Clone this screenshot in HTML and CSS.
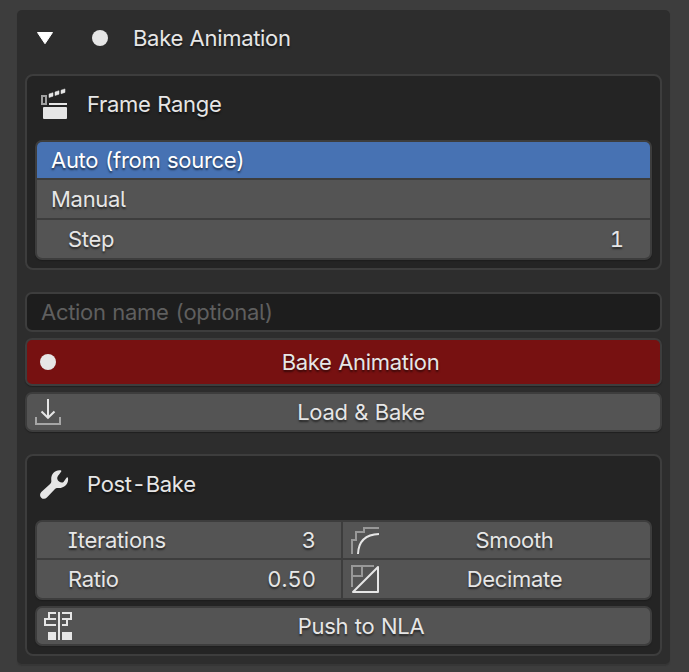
FILE: index.html
```html
<!DOCTYPE html>
<html lang="en">
<head>
<meta charset="utf-8">
<title>Bake Animation</title>
<link rel="stylesheet" href="styles.css">
</head>
<body>
<main class="panel">
  <header class="panel-header">
    <svg class="arrow" width="18" height="14" viewBox="0 0 18 14"><path d="M1.500 1.500h15L9 12.700z" fill="#fff" stroke="#fff" stroke-linejoin="round"/></svg>
    <span class="dot"></span>
    <h1 class="title">Bake Animation</h1>
  </header>

  <section class="box">
    <div class="box-header">
      <svg class="icon" width="32" height="32" viewBox="0 0 32 32">
        <path d="M4 8h4v8H4z" fill="none" stroke="#a0a0a0" stroke-width="2"/>
        <path d="M11 6l4-1.300v3.500L11 9.500zM17 4l4-1.300v3.500L17 7.500zM23 2.200l4-1.300v3.500L23 5.700z" fill="#e6e6e6" stroke="#e6e6e6" stroke-width=".5"/>
        <path d="M11 15h18v2H11z" fill="#e6e6e6"/>
        <rect x="5" y="19" width="24" height="12" rx="1" fill="#e6e6e6"/>
      </svg>
      <h2 class="title">Frame Range</h2>
    </div>
    <div class="group">
      <div class="row choice selected">Auto (from source)</div>
      <div class="row choice">Manual</div>
      <div class="row number"><span>Step</span><span class="value">1</span></div>
    </div>
  </section>

  <div class="actions">
    <input class="field" type="text" placeholder="Action name (optional)">
    <button class="button record"><span class="dot"></span><span class="label">Bake Animation</span></button>
    <button class="button">
      <svg class="icon" width="32" height="32" viewBox="0 0 32 32" fill="none" stroke-width="2">
        <path d="M4 21v7h24v-7" stroke="#a6a6a6"/>
        <path d="M16 3v18.500M9.500 15.500l6.500 6.300 6.500-6.300" stroke="#e6e6e6"/>
      </svg>
      <span class="label">Load &amp; Bake</span>
    </button>
  </div>

  <section class="box">
    <div class="box-header">
      <svg class="icon" width="32" height="32" viewBox="0 0 32 32">
        <path d="M22.500 2.200C17 1.500 12.500 6 13.300 12.500c.2 1.500-.2 2.500-1.200 3.500L3.300 24c-3.800 4 1.800 9.300 5.600 5.600l7.600-8.200c1-1 2-1.400 3.500-1.400 6.500.5 10.800-4.500 10-9.800-.1-1.200-.8-1.300-1.500-.5l-3 4.300c-1.800 1.600-5.500-.3-6.200-3-.3-1.700.4-3 1.600-4.300l2-2.700c.7-.9.600-1.700-.4-1.800z" fill="#e6e6e6"/>
      </svg>
      <h2 class="title">Post-Bake</h2>
    </div>
    <div class="group grid">
      <div class="row number"><span>Iterations</span><span class="value">3</span></div>
      <button class="row operator">
        <svg class="icon" width="32" height="32" viewBox="0 0 32 32" fill="none" stroke-width="2">
          <path d="M3 30V16h4V8h8V4h15" stroke="#989898"/>
          <path d="M9 30C9.500 17 17 10.500 30 10" stroke="#e6e6e6"/>
        </svg>
        <span class="label">Smooth</span>
      </button>
      <div class="row number"><span>Ratio</span><span class="value">0.50</span></div>
      <button class="row operator">
        <svg class="icon" width="32" height="32" viewBox="0 0 32 32" fill="none" stroke-width="2">
          <path d="M3 24V3h22M3 13h10V3" stroke="#989898"/>
          <path d="M29 4v25H4z" stroke="#e6e6e6" stroke-linejoin="round"/>
        </svg>
        <span class="label">Decimate</span>
      </button>
    </div>
    <button class="button push">
      <svg class="icon" width="32" height="32" viewBox="0 0 32 32" fill="none" stroke="#e6e6e6" stroke-width="2">
        <path d="M14 3H7v6M14 9H3v6h11M17 2v28M20 3h9v6h-9M25 9v6h-5"/>
        <path d="M6 22h8v8H6zM20 22h10v8H20z" fill="#e6e6e6" stroke="none"/>
      </svg>
      <span class="label">Push to NLA</span>
    </button>
  </section>
</main>
</body>
</html>
```
FILE: styles.css
```css
* { box-sizing: border-box; }

body {
  margin: 0;
  min-height: 672px;
  padding: 10px 19px 8px 17px;
  background: #3d3d3d;
  color: #e6e6e6;
  font: 400 22px/1 Inter, "Liberation Sans", sans-serif;
  font-feature-settings: "cv05", "cv08", "tnum";
  letter-spacing: -.3px;
  word-spacing: 1px;
  text-shadow: 0 2px 2px rgba(0, 0, 0, .55);
}

button, input {
  font: inherit;
  color: inherit;
  font-feature-settings: inherit;
  letter-spacing: inherit;
  word-spacing: inherit;
  text-shadow: inherit;
}
svg { display: block; flex: none; }

.panel {
  height: 654px;
  padding: 0 8px;
  border-radius: 5px;
  background: #2d2d2d;
  box-shadow: 0 2px 1px #363636;
}

.panel-header { display: flex; align-items: center; height: 64px; padding: 0 0 8px 11px; }
.arrow { margin-right: 38px; width: 18px; }
.title { margin: 0; font-size: 22px; font-weight: 400; }
.dot { flex: none; width: 16px; height: 16px; border-radius: 50%; background: #e6e6e6; }
.panel-header .title { margin-left: 25px; }

.box {
  padding: 0 8px 8px;
  border: 2px solid #3d3d3d;
  border-radius: 8px;
  background: #242424;
}
.box-header { display: flex; align-items: center; gap: 17px; height: 64px; padding: 0 0 8px 3px; }

.group {
  display: grid;
  gap: 2px;
  grid-template-rows: 36px 38px 38px;
  overflow: hidden;
  border: 2px solid #3d3d3d;
  border-radius: 7px;
  background: #3d3d3d;
  box-shadow: 0 1px 1px #1d1d1d;
}
.grid { grid-template: 36px 38px / 304px 1fr; }

.row { display: flex; align-items: center; background: #545454; }
.choice { padding-left: 14px; }
.selected { background: #4772b3; color: #fff; }
.number { justify-content: space-between; padding: 0 26px 0 31px; }
.value { letter-spacing: 0; }
.operator { border: 0; padding: 0 2px 0 6px; }
.label { flex: 1; text-align: center; }

.actions { display: grid; gap: 6px; padding: 22px 0; grid-template-rows: 40px 48px 40px; }

.field, .button {
  width: 100%;
  border: 2px solid #3d3d3d;
  border-radius: 7px;
}
.field { padding: 0 14px; background: #1d1d1d; text-shadow: none; outline: 0; }
.field::placeholder { color: #5f5f5f; opacity: 1; }
.button {
  display: flex;
  align-items: center;
  height: 40px;
  padding: 0 2px 0 5px;
  background: #545454;
  box-shadow: 0 1px 1px #202020;
}
.record { height: 48px; padding: 0 0 0 13px; background: #771111; }
.record .label { padding-left: 5px; }
.push { margin-top: 6px; }
.grid .number { padding-right: 25px; }
```
